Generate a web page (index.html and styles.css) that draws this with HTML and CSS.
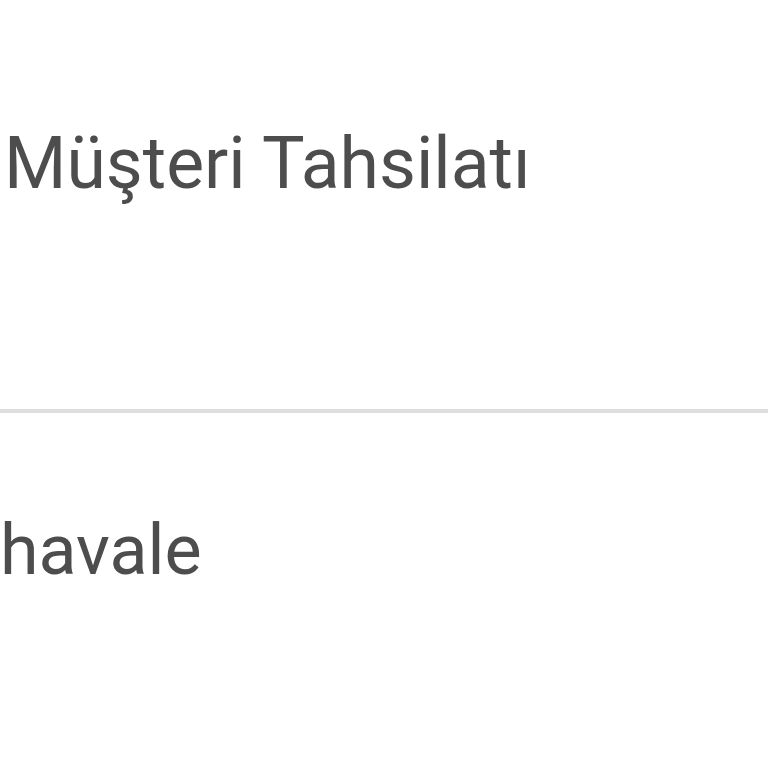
FILE: index.html
```html
<!DOCTYPE html>
<html lang="tr">
<head>
<meta charset="utf-8">
<link rel="stylesheet" href="styles.css">
</head>
<body>
<div class="list">
  <div class="row row-title"><span class="label title">Müşteri Tahsilatı</span></div>
  <div class="divider"></div>
  <div class="row row-value"><span class="label value">havale</span></div>
</div>
</body>
</html>
```
FILE: styles.css
```css
html, body {
  margin: 0;
  padding: 0;
  background: #ffffff;
}
.list {
  display: flex;
  flex-direction: column;
  width: 768px;
  height: 768px;
  overflow: hidden;
}
.row {
  display: flex;
  align-items: flex-start;
  box-sizing: border-box;
}
.label {
  font-family: Roboto, "Liberation Sans", sans-serif;
  font-size: 70px;
  line-height: 82px;
  color: #4d4d4d;
  white-space: nowrap;
}
.title {
  font-size: 71.5px;
}
.row-title {
  height: 409px;
  padding-left: 4px;
  padding-top: 123px;
  flex: none;
}
.divider {
  height: 4px;
  background: #dedede;
  flex: none;
}
.row-value {
  padding-left: 0;
  padding-top: 96px;
}
```
